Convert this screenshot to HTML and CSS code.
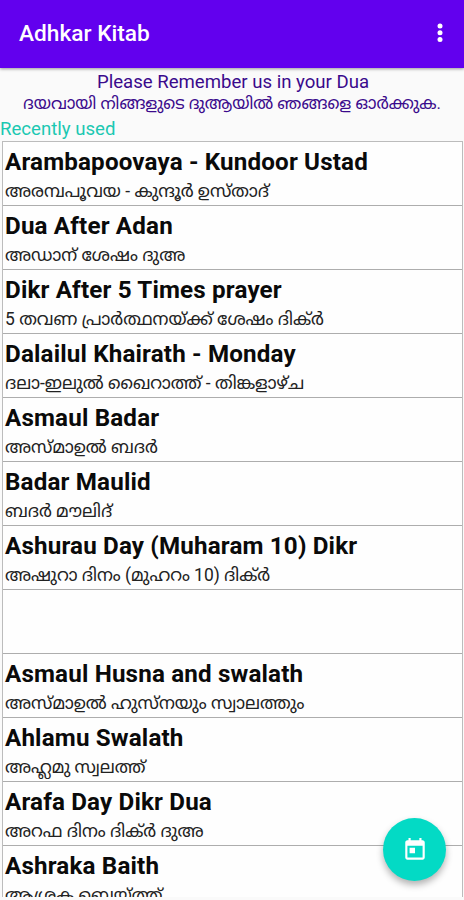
FILE: index.html
```html
<!DOCTYPE html>
<html lang="en">
<head>
<meta charset="utf-8">
<title>Adhkar Kitab</title>
<link rel="stylesheet" href="styles.css">
</head>
<body>
<header class="bar">
  <h1 class="bar-title">Adhkar Kitab</h1>
  <svg class="more" viewBox="0 0 8 20" aria-label="More"><circle cx="4" cy="3" r="2.5"/><circle cx="4" cy="9.7" r="2.5"/><circle cx="4" cy="16.4" r="2.5"/></svg>
</header>
<div class="notice">
  <p class="notice-en">Please Remember us in your Dua</p>
  <p class="notice-ml" lang="ml">ദയവായി നിങ്ങളുടെ ദുആയിൽ ഞങ്ങളെ ഓർക്കുക.</p>
</div>
<h2 class="section">Recently used</h2>
<ul class="list">
  <li class="row"><b class="name">Arambapoovaya - Kundoor Ustad</b><span class="sub" lang="ml">അരമ്പപൂവയ - കുന്ദൂർ ഉസ്താദ്</span></li>
  <li class="row"><b class="name">Dua After Adan</b><span class="sub" lang="ml">അഡാന് ശേഷം ദുഅ</span></li>
  <li class="row"><b class="name">Dikr After 5 Times prayer</b><span class="sub" lang="ml">5 തവണ പ്രാർത്ഥനയ്ക്ക് ശേഷം ദിക്ർ</span></li>
  <li class="row"><b class="name">Dalailul Khairath - Monday</b><span class="sub" lang="ml">ദലാ-ഇലുൽ ഖൈറാത്ത് - തിങ്കളാഴ്ച</span></li>
  <li class="row"><b class="name">Asmaul Badar</b><span class="sub" lang="ml">അസ്മാഉൽ ബദർ</span></li>
  <li class="row"><b class="name">Badar Maulid</b><span class="sub" lang="ml">ബദർ മൗലിദ്</span></li>
  <li class="row"><b class="name">Ashurau Day (Muharam 10) Dikr</b><span class="sub" lang="ml">അഷുറാ ദിനം (മുഹറം 10) ദിക്ർ</span></li>
  <li class="row"></li>
  <li class="row"><b class="name">Asmaul Husna and swalath</b><span class="sub" lang="ml">അസ്മാഉൽ ഹുസ്നയും സ്വാലത്തും</span></li>
  <li class="row"><b class="name">Ahlamu Swalath</b><span class="sub" lang="ml">അഹ്ലമു സ്വലത്ത്</span></li>
  <li class="row"><b class="name">Arafa Day Dikr Dua</b><span class="sub" lang="ml">അറഫ ദിനം ദിക്ർ ദുഅ</span></li>
  <li class="row"><b class="name">Ashraka Baith</b><span class="sub" lang="ml">ആശ്രക ബെയ്ത്ത്</span></li>
</ul>
<button class="fab" aria-label="Calendar">
  <svg class="fab-icon" viewBox="0 0 24 24"><path d="M19 3h-1V1h-2v2H8V1H6v2H5c-1.11 0-1.99.9-1.99 2L3 19c0 1.1.89 2 2 2h14c1.1 0 2-.9 2-2V5c0-1.1-.9-2-2-2zm0 16H5V8h14v11zM7 10h5v5H7z"/></svg>
</button>
</body>
</html>
```
FILE: styles.css
```css
* { box-sizing: border-box; margin: 0; padding: 0; }
body {
  width: 464px;
  height: 900px;
  overflow: hidden;
  display: flex;
  flex-direction: column;
  background: #fafafa;
  font-family: Roboto, "Noto Sans Malayalam", "Noto Sans", sans-serif;
}
.bar {
  flex: none;
  height: 68px;
  padding: 0 20px 2px 19px;
  display: flex;
  align-items: center;
  justify-content: space-between;
  background: #6200ee;
  box-shadow: 0 1px 3px rgba(0, 0, 0, .4);
}
.bar-title { padding-top: 1px; font-size: 22.7px; font-weight: 500; line-height: 30px; color: #fff; }
.more { width: 8px; height: 20px; fill: #fff; }
.notice { flex: none; height: 49px; padding-top: 2px; text-align: center; color: #3a0a8c; white-space: nowrap; }
.notice-en { padding-left: 2px; font-size: 18.6px; line-height: 24px; }
.notice-ml { font-size: 16.65px; line-height: 20px; }
.section { flex: none; height: 24.4px; font-size: 18.6px; font-weight: 400; line-height: 24px; color: #1cc8b2; }
.list {
  flex: none;
  height: 755.6px;
  margin: 0 1px 0 2px;
  overflow: hidden;
  list-style: none;
  background: #fefefe;
  border: solid #bcbcbc;
  border-width: 1px 1px 0;
}
.row {
  height: 63.97px;
  padding: 4px 0 0 2px;
  border-bottom: 1px solid #adadad;
  white-space: nowrap;
}
.name { display: block; font-size: 24.2px; font-weight: 700; line-height: 32px; letter-spacing: .16px; color: #0a0a0a; }
.sub { display: block; font-size: 17.45px; line-height: 26px; color: #222; }
.fab {
  position: absolute;
  left: 383px;
  top: 818px;
  width: 63px;
  height: 63px;
  border: 0;
  border-radius: 50%;
  background: #03dac5;
  box-shadow: 0 4px 7px rgba(0, 0, 0, .3);
  display: flex;
  align-items: center;
  justify-content: center;
}
.fab-icon { width: 26px; height: 26px; fill: #fff; }
```
